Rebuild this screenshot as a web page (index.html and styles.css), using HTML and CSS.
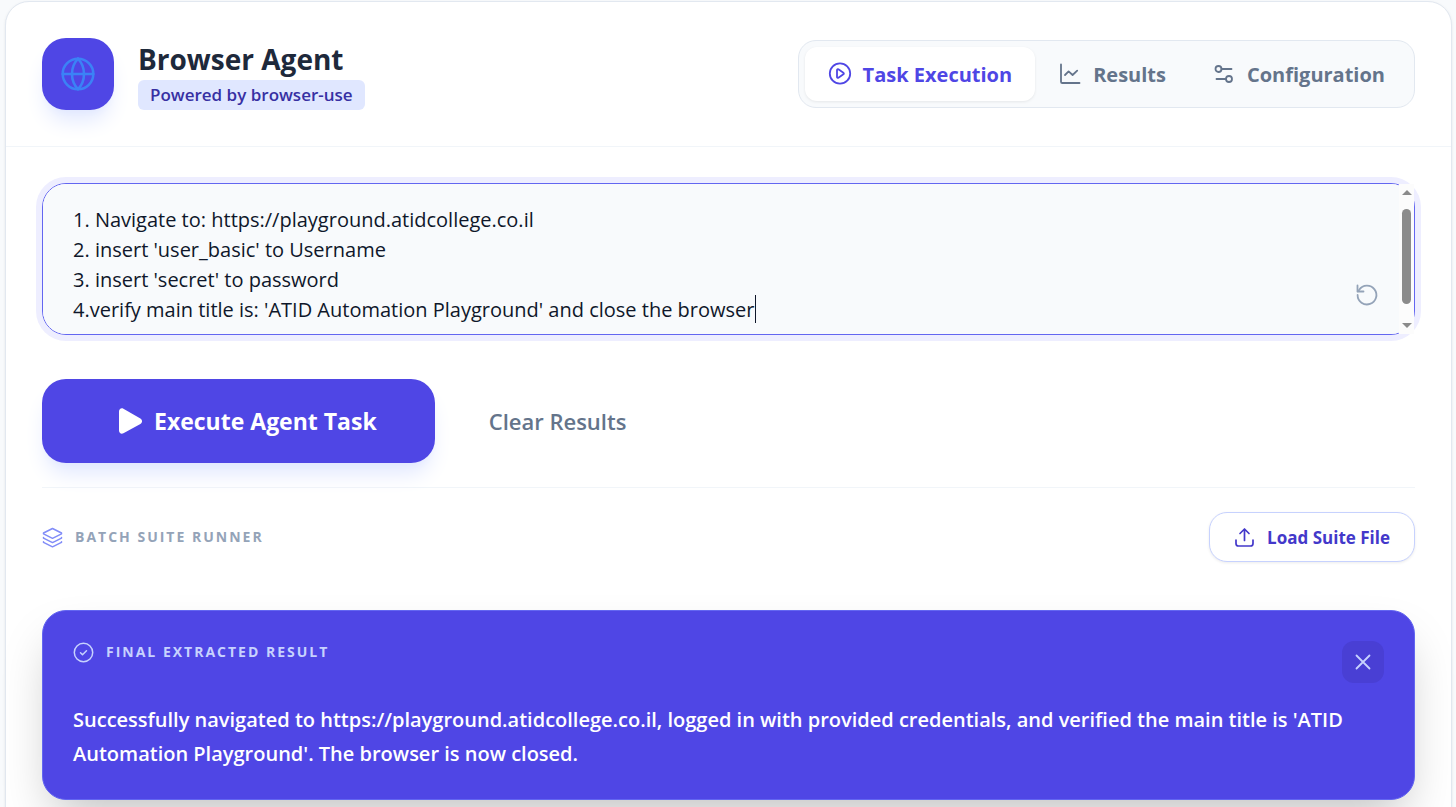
FILE: index.html
```html
<!DOCTYPE html>
<html lang="en">

<head>
  <title>Browser Agent</title>
  <meta charset="UTF-8">
  <meta name="viewport" content="width=device-width, initial-scale=1.0">
  <link rel="stylesheet" href="styles.css">
  <script src="script.js" defer></script>
</head>

<body>
  <div id="app" class="card">
    <header class="card-header">
      <div class="brand">
        <div class="logo">
          <svg width="36" height="36" viewBox="0 0 24 24" stroke-width="1.7">
            <circle cx="12" cy="12" r="10.2"/>
            <path d="M12 1.8a15 15 0 0 0 0 20.4 15 15 0 0 0 0-20.4M1.8 12h20.4"/>
          </svg>
        </div>
        <div class="brand-text">
          <h1>Browser Agent</h1>
          <span class="badge">Powered by browser-use</span>
        </div>
      </div>

      <nav class="tabs">
        <button type="button" class="tab active">
          <svg width="24" height="24" viewBox="0 0 24 24" stroke-width="1.8">
            <circle cx="12" cy="11.5" r="10.2"/>
            <path d="M9 8.1v6.8c0 .8.7 1.2 1.4.8l5-3.4c.6-.4.6-1.2 0-1.6l-5-3.4c-.7-.4-1.4 0-1.4.8z"/>
          </svg>
          Task Execution
        </button>
        <button type="button" class="tab">
          <svg width="24" height="24" viewBox="0 0 24 24" stroke-width="1.8">
            <path d="M3 2.5v17.2c0 .8.4 1.3 1.3 1.3H21.5"/>
            <path d="M7 13l3.6-3.6 4 3.6L19.2 8.6"/>
          </svg>
          Results
        </button>
        <button type="button" class="tab">
          <svg width="24" height="24" viewBox="0 0 24 24" stroke-width="1.8">
            <circle cx="6.5" cy="7" r="3"/>
            <path d="M9.5 7H19.5M4.5 17H14"/>
            <circle cx="17" cy="17" r="3"/>
          </svg>
          Configuration
        </button>
      </nav>
    </header>

    <main class="card-body">
      <div class="task-box">
        <textarea id="task" class="task-input" aria-label="Task" spellcheck="false">1. Navigate to: https://playground.atidcollege.co.il
2. insert 'user_basic' to Username
3. insert 'secret' to password
4.verify main title is: 'ATID Automation Playground' and close the browser</textarea>
        <span class="caret"></span>
        <div class="scrollbar" aria-hidden="true">
          <svg class="solid" width="10" height="5" viewBox="0 0 10 5"><path d="M0 5L5 0l5 5z"/></svg>
          <div class="scroll-track">
            <div class="scroll-thumb"></div>
          </div>
          <svg class="solid" width="10" height="5" viewBox="0 0 10 5"><path d="M0 0l5 5 5-5z"/></svg>
        </div>
        <button type="button" class="reset-btn" aria-label="Reset">
          <svg width="24" height="24" viewBox="0 0 24 24" stroke-width="1.8">
            <path d="M2.5 2.5v6h6"/>
            <path d="M2.6 12a9.4 9.4 0 1 0 1.6-5.2L2.8 8.3"/>
          </svg>
        </button>
      </div>

      <div class="actions">
        <button type="button" class="btn-run">
          <svg class="solid" width="42" height="30" viewBox="0 0 42 30">
            <path d="M19 5.5v19c0 2.5 2.2 4 4.4 2.8l17-9.4c2.2-1.2 2.2-4.2 0-5.4l-17-9.8c-2.2-1.2-4.4.3-4.4 2.8z"/>
          </svg>
          Execute Agent Task
        </button>
        <button type="button" class="btn-clear">Clear Results</button>
      </div>

      <section class="batch">
        <h2 class="label">
          <svg width="21" height="21" viewBox="0 0 21 21" stroke-width="1.5">
            <path d="M10.5 1.5l9 4.5v.8l-9 4.5-9-4.5V6z"/>
            <path d="M1.5 10.5v.6l9 4.5 9-4.5v-.6M1.5 14.7v.6l9 4.5 9-4.5v-.6"/>
          </svg>
          Batch Suite Runner
        </h2>
        <button type="button" class="btn-load">
          <svg width="21" height="21" viewBox="0 0 21 21" stroke-width="1.7">
            <path d="M10.5 13.5v-11M6 6.5l4.5-4.5L15 6.5"/>
            <path d="M2 13v3.5c0 1.7.8 2.5 2.5 2.5h12c1.7 0 2.5-.8 2.5-2.5V13"/>
          </svg>
          Load Suite File
        </button>
      </section>

      <section class="result">
        <div class="result-header">
          <h2 class="label">
            <svg width="21" height="21" viewBox="0 0 21 21" stroke-width="1.5">
              <circle cx="10.5" cy="10.5" r="9.2"/>
              <path d="M7.5 10.8l2 2 4-4"/>
            </svg>
            Final Extracted Result
          </h2>
          <button type="button" class="btn-close" aria-label="Close">
            <svg width="18" height="18" viewBox="0 0 18 18" stroke-width="1.8">
              <path d="M2.5 2.5l13 13M15.5 2.5l-13 13"/>
            </svg>
          </button>
        </div>
        <p>Successfully navigated to https://playground.atidcollege.co.il, logged in with provided credentials, and verified the main title is 'ATID Automation Playground'. The browser is now closed.</p>
      </section>
    </main>
  </div>
</body>

</html>
```
FILE: styles.css
```css
* {
  box-sizing: border-box;
}

body {
  font-family: "Segoe UI", "Open Sans", "Noto Sans", sans-serif;
  background-color: #f8fafc;
  color: #1e293b;
  margin: 0;
  padding: 1px 4px 0 5px;
}

h1,
h2,
p {
  margin: 0;
}

button {
  font-family: inherit;
  border: none;
  background: none;
  padding: 0;
  cursor: pointer;
  display: flex;
  align-items: center;
  justify-content: center;
  white-space: nowrap;
}

svg {
  display: block;
  flex-shrink: 0;
  fill: none;
  stroke: currentColor;
  stroke-linecap: round;
  stroke-linejoin: round;
}

svg.solid {
  fill: currentColor;
  stroke: none;
}

.card {
  background-color: #fff;
  border: 1px solid #e2e8f0;
  border-radius: 24px;
  box-shadow: 0 1px 3px rgba(0, 0, 0, 0.08);
  min-height: 100vh;
}

/* header */
.card-header {
  display: flex;
  align-items: center;
  justify-content: space-between;
  padding: 36px;
  border-bottom: 1px solid #f1f5f9;
}

.brand {
  display: flex;
  align-items: center;
  gap: 24px;
}

.logo {
  display: flex;
  align-items: center;
  justify-content: center;
  width: 72px;
  height: 72px;
  border-radius: 24px;
  background-color: #4f46e5;
  color: #3b82f6;
  box-shadow: 0 15px 22px -5px #e0e7ff, 0 6px 9px -6px #e0e7ff;
}

.brand-text {
  display: flex;
  flex-direction: column;
  align-items: flex-start;
}

h1 {
  font-size: 28px;
  line-height: 42px;
  font-weight: 700;
}

.badge {
  background-color: #e0e7ff;
  color: #3730a3;
  font-size: 17px;
  line-height: 30px;
  font-weight: 600;
  padding: 0 12px;
  border-radius: 6px;
}

.tabs {
  display: flex;
  padding: 6px;
  background-color: #f8fafc;
  border: 1px solid #e2e8f0;
  border-radius: 18px;
}

.tab {
  gap: 11px;
  height: 54px;
  padding: 0 23px;
  border-radius: 12px;
  font-size: 20px;
  font-weight: 700;
  color: #64748b;
}

.tab.active {
  background-color: #fff;
  color: #4f46e5;
  box-shadow: 0 1px 3px rgba(0, 0, 0, 0.08);
}

/* task input */
.card-body {
  padding: 36px;
}

.task-box {
  position: relative;
}

.task-input {
  display: block;
  width: 100%;
  height: 152px;
  padding: 30px;
  resize: none;
  scrollbar-width: none;
  font-family: inherit;
  font-size: 20px;
  line-height: 30px;
  color: #0f172a;
  caret-color: transparent;
  background-color: #f8fafc;
  border: 1px solid #6366f1;
  border-radius: 24px;
  outline: none;
  box-shadow: 0 0 0 6px #eeeeff;
}

.caret {
  position: absolute;
  left: 713px;
  bottom: 12px;
  width: 1px;
  height: 28px;
  background-color: #0f172a;
}

.scrollbar {
  position: absolute;
  top: 1px;
  right: 1px;
  bottom: 1px;
  width: 15px;
  padding: 6px 0;
  display: flex;
  flex-direction: column;
  align-items: center;
  background-color: #fcfcfc;
  color: #8b8b8b;
}

.scroll-track {
  flex: 1;
  padding: 14px 0;
}

.scroll-thumb {
  width: 9px;
  height: 95px;
  border-radius: 5px;
  background-color: #8b8b8b;
}

.reset-btn {
  position: absolute;
  right: 36px;
  bottom: 28px;
  color: #94a3b8;
}

/* actions */
.actions {
  display: flex;
  align-items: center;
  gap: 18px;
  padding: 44px 0 24px;
  border-bottom: 1px solid #f1f5f9;
}

.btn-run {
  gap: 12px;
  height: 84px;
  padding: 0 58px;
  border-radius: 24px;
  background-color: #4f46e5;
  color: #fff;
  font-size: 23px;
  font-weight: 700;
  box-shadow: 0 15px 22px -5px #e0e7ff, 0 6px 9px -6px #e0e7ff;
}

.btn-clear {
  height: 84px;
  padding: 0 36px;
  color: #64748b;
  font-size: 22px;
  font-weight: 600;
}

/* batch runner */
.batch {
  display: flex;
  align-items: center;
  justify-content: space-between;
  padding: 24px 0 48px;
}

.label {
  display: flex;
  align-items: center;
  gap: 12px;
  font-size: 14px;
  line-height: 22px;
  font-weight: 700;
  letter-spacing: 2px;
  text-transform: uppercase;
  color: #94a3b8;
}

.batch .label svg {
  color: #818cf8;
}

.btn-load {
  gap: 12px;
  height: 50px;
  padding: 0 24px;
  border: 1px solid #c7d2fe;
  border-radius: 18px;
  background-color: #fff;
  color: #4338ca;
  font-size: 17px;
  font-weight: 700;
  box-shadow: 0 1px 3px rgba(0, 0, 0, 0.08);
}

/* result panel */
.result {
  padding: 30px 30px 28px;
  border: 1px solid #6366f1;
  border-radius: 24px;
  background-color: #4f46e5;
  color: #fff;
  box-shadow: 0 25px 50px -12px rgba(0, 0, 0, 0.25);
}

.result-header {
  display: flex;
  align-items: flex-start;
  justify-content: space-between;
  margin-bottom: 20px;
}

.result .label {
  color: #c7d2fe;
}

.btn-close {
  width: 42px;
  height: 42px;
  border-radius: 12px;
  background-color: #493fd4;
  color: #c7d2fe;
}

.result p {
  font-size: 20px;
  line-height: 34px;
  font-weight: 600;
}
```
FILE: script.js
```js
const task = document.getElementById('task');

task.focus();
task.setSelectionRange(task.value.length, task.value.length);
task.scrollTop = 9;
```
